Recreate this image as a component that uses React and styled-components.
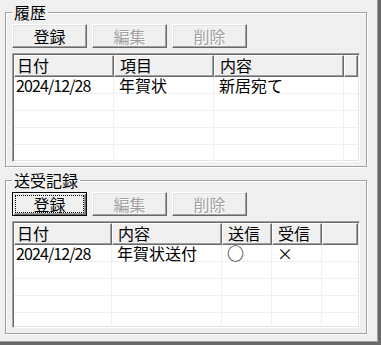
import React from "react";
import styled, { createGlobalStyle, css } from "styled-components";

const Global = createGlobalStyle`
  html, body { margin: 0; padding: 0; background: #f0f0f0; }
  body { font-family: "Noto Sans CJK JP", "Noto Sans", sans-serif; font-size: 16px; color: #000; }
  * { box-sizing: border-box; }
`;

const Window = styled.div`
  width: 381px;
  height: 345px;
  background: #f0f0f0;
  border-right: 3px solid #696969;
  border-bottom: 3px solid #696969;
  box-shadow: inset -1px -1px 0 #a0a0a0;
  padding: 12px 0 0 5px;
  display: flex;
  flex-direction: column;
  gap: 13px;
`;

const Group = styled.section`
  position: relative;
  width: 362px;
  border: 1px solid #a0a0a0;
  box-shadow: 1px 1px 0 #fff, inset 1px 1px 0 #fff;
  padding: 11px 6px ${(p) => p.$padBottom}px 6px;
  display: flex;
  flex-direction: column;
  gap: 5px;
`;

const Caption = styled.div`
  position: absolute;
  top: -9px;
  left: 6px;
  padding: 0 2px;
  background: #f0f0f0;
  line-height: 16px;
  font-size: 16px;
`;

const Toolbar = styled.div`
  display: flex;
  gap: 5px;
`;

const Button = styled.button`
  width: 75px;
  height: 24px;
  padding: 0;
  margin: 0;
  font-family: inherit;
  font-size: 16px;
  line-height: 16px;
  background: #f0f0f0;
  color: #000;
  border: 1px solid;
  border-color: #fff #696969 #696969 #fff;
  box-shadow: inset -1px -1px 0 #a0a0a0, inset 1px 1px 0 #e3e3e3;
  ${(p) =>
    p.disabled &&
    css`
      color: #a0a0a0;
      text-shadow: 1px 1px 0 #fff;
    `}
  ${(p) =>
    p.$focused &&
    css`
      border-color: #000;
      box-shadow: inset 1px 1px 0 #fff, inset -1px -1px 0 #696969,
        inset 2px 2px 0 #e3e3e3, inset -2px -2px 0 #a0a0a0;
      outline: 1px dotted #000;
      outline-offset: -4px;
    `}
`;

const ListView = styled.div`
  width: 348px;
  height: ${(p) => p.$height}px;
  overflow: hidden;
  background: #fff;
  border: 1px solid;
  border-color: #a0a0a0 #fff #fff #a0a0a0;
  box-shadow: inset 1px 1px 0 #696969, inset -1px -1px 0 #e3e3e3;
  padding: 1px;
`;

const HeaderRow = styled.div`
  display: flex;
  height: 22px;
  background: #f0f0f0;
`;

const HeaderCell = styled.div`
  flex: ${(p) => (p.$w ? `0 0 ${p.$w}px` : "1 1 auto")};
  height: 22px;
  border-top: 1px solid #fff;
  border-left: 1px solid #fff;
  border-right: 1px solid #696969;
  border-bottom: 1px solid #696969;
  box-shadow: inset -1px -1px 0 #a0a0a0;
  padding-left: ${(p) => p.$pad}px;
  line-height: 19px;
  white-space: nowrap;
`;

const Row = styled.div`
  display: flex;
  height: 17px;
  border-bottom: 1px solid #f0f0f0;
`;

const Cell = styled.div`
  flex: ${(p) => (p.$w ? `0 0 ${p.$w}px` : "1 1 auto")};
  height: 16px;
  border-right: ${(p) => (p.$w ? "1px solid #f0f0f0" : "none")};
  padding-left: ${(p) => p.$pad}px;
  line-height: 16px;
  white-space: nowrap;
  letter-spacing: ${(p) => (p.$narrow ? "-0.9px" : "0")};
`;

const Mark = styled.span`
  display: inline-block;
  font-size: ${(p) => (p.$big ? 17 : 16)}px;
`;

function List({ columns, rows, height, emptyRows }) {
  return (
    <ListView $height={height}>
      <HeaderRow>
        {columns.map((c, i) => (
          <HeaderCell key={i} $w={c.w} $pad={c.pad}>
            {c.label}
          </HeaderCell>
        ))}
        <HeaderCell $pad={0} />
      </HeaderRow>
      {rows.map((r, ri) => (
        <Row key={ri}>
          {columns.map((c, i) => (
            <Cell key={i} $w={c.w} $pad={c.pad} $narrow={c.narrow}>
              {r[i] ? <Mark $big={r[i] === "○"}>{r[i]}</Mark> : null}
            </Cell>
          ))}
          <Cell $pad={0} />
        </Row>
      ))}
      {Array.from({ length: emptyRows }).map((_, ri) => (
        <Row key={"e" + ri}>
          {columns.map((c, i) => (
            <Cell key={i} $w={c.w} $pad={c.pad} />
          ))}
          <Cell $pad={0} />
        </Row>
      ))}
    </ListView>
  );
}

const historyCols = [
  { label: "日付", w: 100, pad: 2, narrow: true },
  { label: "項目", w: 100, pad: 5 },
  { label: "内容", w: 130, pad: 5 },
];

const sendCols = [
  { label: "日付", w: 98, pad: 2, narrow: true },
  { label: "内容", w: 110, pad: 5 },
  { label: "送信", w: 50, pad: 5 },
  { label: "受信", w: 50, pad: 5 },
];

export default function App() {
  return (
    <>
      <Global />
      <Window>
        <Group $padBottom={4}>
          <Caption>履歴</Caption>
          <Toolbar>
            <Button>登録</Button>
            <Button disabled>編集</Button>
            <Button disabled>削除</Button>
          </Toolbar>
          <List
            columns={historyCols}
            rows={[["2024/12/28", "年賀状", "新居宛て"]]}
            height={109}
            emptyRows={5}
          />
        </Group>
        <Group $padBottom={5}>
          <Caption>送受記録</Caption>
          <Toolbar>
            <Button $focused>登録</Button>
            <Button disabled>編集</Button>
            <Button disabled>削除</Button>
          </Toolbar>
          <List
            columns={sendCols}
            rows={[["2024/12/28", "年賀状送付", "○", "×"]]}
            height={107}
            emptyRows={5}
          />
        </Group>
      </Window>
    </>
  );
}
